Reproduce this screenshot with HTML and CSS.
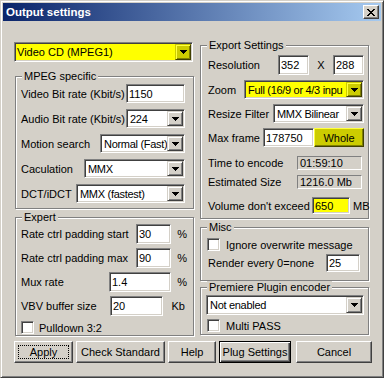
FILE: index.html
```html
<!DOCTYPE html>
<html lang="en">
<head>
    <meta charset="UTF-8">
    <meta name="viewport" content="width=device-width, initial-scale=1.0">
    <title>Output settings</title>
    <link rel="stylesheet" href="styles.css">
</head>
<body>
    <div class="window">
        <div class="titlebar">
            <span class="title">Output settings</span>
            <span class="close">
                <svg width="8" height="7" viewBox="0 0 8 7"><path d="M0 0h2v1H0zM6 0h2v1H6zM1 1h2v1H1zM5 1h2v1H5zM2 2h4v1H2zM3 3h2v1H3zM2 4h4v1H2zM1 5h2v1H1zM5 5h2v1H5zM0 6h2v1H0zM6 6h2v1H6z" fill="#000"/></svg>
            </span>
        </div>
        <div class="columns">
            <div class="col-left">
                <div class="combo yellow format">
                    <span class="combo-text">Video CD (MPEG1)</span>
                    <span class="combo-btn"><svg width="7" height="4" viewBox="0 0 7 4"><path d="M0 0h7v1H0zM1 1h5v1H1zM2 2h3v1H2zM3 3h1v1H3z"/></svg></span>
                </div>
                <div class="group mpeg">
                    <div class="group-title">MPEG specific</div>
                    <div class="rows">
                        <div class="row">
                            <span class="label">Video Bit rate (Kbit/s)</span>
                            <input class="edit bitrate" type="text" value="1150">
                        </div>
                        <div class="row">
                            <span class="label">Audio Bit rate (Kbit/s)</span>
                            <div class="combo bitrate">
                                <span class="combo-text">224</span>
                                <span class="combo-btn"><svg width="7" height="4" viewBox="0 0 7 4"><path d="M0 0h7v1H0zM1 1h5v1H1zM2 2h3v1H2zM3 3h1v1H3z"/></svg></span>
                            </div>
                        </div>
                        <div class="row">
                            <span class="label">Motion search</span>
                            <div class="combo motion">
                                <span class="combo-text">Normal (Fast)</span>
                                <span class="combo-btn"><svg width="7" height="4" viewBox="0 0 7 4"><path d="M0 0h7v1H0zM1 1h5v1H1zM2 2h3v1H2zM3 3h1v1H3z"/></svg></span>
                            </div>
                        </div>
                        <div class="row">
                            <span class="label">Caculation</span>
                            <div class="combo calc">
                                <span class="combo-text">MMX</span>
                                <span class="combo-btn"><svg width="7" height="4" viewBox="0 0 7 4"><path d="M0 0h7v1H0zM1 1h5v1H1zM2 2h3v1H2zM3 3h1v1H3z"/></svg></span>
                            </div>
                        </div>
                        <div class="row">
                            <span class="label">DCT/iDCT</span>
                            <div class="combo dct">
                                <span class="combo-text">MMX (fastest)</span>
                                <span class="combo-btn"><svg width="7" height="4" viewBox="0 0 7 4"><path d="M0 0h7v1H0zM1 1h5v1H1zM2 2h3v1H2zM3 3h1v1H3z"/></svg></span>
                            </div>
                        </div>
                    </div>
                </div>
                <div class="group expert">
                    <div class="group-title">Expert</div>
                    <div class="rows">
                        <div class="row">
                            <span class="label">Rate ctrl padding start</span>
                            <input class="edit padding" type="text" value="30">
                            <span class="unit">%</span>
                        </div>
                        <div class="row">
                            <span class="label">Rate ctrl padding max</span>
                            <input class="edit padding" type="text" value="90">
                            <span class="unit">%</span>
                        </div>
                        <div class="row">
                            <span class="label">Mux rate</span>
                            <input class="edit mux" type="text" value="1.4">
                            <span class="unit">%</span>
                        </div>
                        <div class="row">
                            <span class="label">VBV buffer size</span>
                            <input class="edit vbv" type="text" value="20">
                            <span class="unit wide">Kb</span>
                        </div>
                        <div class="row check-row pulldown">
                            <span class="check"></span>
                            <span class="check-label">Pulldown 3:2</span>
                        </div>
                    </div>
                </div>
            </div>
            <div class="col-right">
                <div class="group export">
                    <div class="group-title">Export Settings</div>
                    <div class="rows">
                        <div class="row tall">
                            <span class="label">Resolution</span>
                            <input class="edit res" type="text" value="352">
                            <span class="times">X</span>
                            <input class="edit res" type="text" value="288">
                        </div>
                        <div class="row">
                            <span class="label">Zoom</span>
                            <div class="combo yellow zoom">
                                <span class="combo-text">Full (16/9 or 4/3 inpu</span>
                                <span class="combo-btn"><svg width="7" height="4" viewBox="0 0 7 4"><path d="M0 0h7v1H0zM1 1h5v1H1zM2 2h3v1H2zM3 3h1v1H3z"/></svg></span>
                            </div>
                        </div>
                        <div class="row">
                            <span class="label">Resize Filter</span>
                            <div class="combo resize">
                                <span class="combo-text">MMX Bilinear</span>
                                <span class="combo-btn"><svg width="7" height="4" viewBox="0 0 7 4"><path d="M0 0h7v1H0zM1 1h5v1H1zM2 2h3v1H2zM3 3h1v1H3z"/></svg></span>
                            </div>
                        </div>
                        <div class="row">
                            <span class="label">Max frame</span>
                            <input class="edit maxframe" type="text" value="178750">
                            <button class="btn yellow whole">Whole</button>
                        </div>
                        <div class="row small time">
                            <span class="label">Time to encode</span>
                            <span class="static">01:59:10</span>
                        </div>
                        <div class="row small">
                            <span class="label">Estimated Size</span>
                            <span class="static">1216.0 Mb</span>
                        </div>
                        <div class="row volume">
                            <span class="label">Volume don't exceed</span>
                            <input class="edit yellow vol" type="text" value="650">
                            <span class="mb">MB</span>
                        </div>
                    </div>
                </div>
                <div class="group misc">
                    <div class="group-title">Misc</div>
                    <div class="rows">
                        <div class="row check-row">
                            <span class="check"></span>
                            <span class="check-label">Ignore overwrite message</span>
                        </div>
                        <div class="row render">
                            <span class="label">Render every 0=none</span>
                            <input class="edit every" type="text" value="25">
                        </div>
                    </div>
                </div>
                <div class="group premiere">
                    <div class="group-title">Premiere Plugin encoder</div>
                    <div class="rows">
                        <div class="row tall">
                            <div class="combo plugin">
                                <span class="combo-text">Not enabled</span>
                                <span class="combo-btn"><svg width="7" height="4" viewBox="0 0 7 4"><path d="M0 0h7v1H0zM1 1h5v1H1zM2 2h3v1H2zM3 3h1v1H3z"/></svg></span>
                            </div>
                        </div>
                        <div class="row check-row">
                            <span class="check"></span>
                            <span class="check-label">Multi PASS</span>
                        </div>
                    </div>
                </div>
            </div>
        </div>
        <div class="buttons">
            <button class="btn focused apply">Apply</button>
            <button class="btn check-std">Check Standard</button>
            <button class="btn help">Help</button>
            <button class="btn default plug">Plug Settings</button>
            <button class="btn cancel">Cancel</button>
        </div>
    </div>
</body>
</html>
```

FILE: styles.css
```css
body {
    margin: 0;
    padding: 0;
    background-color: #d4d0c8;
    font-family: "Liberation Sans", Arial, sans-serif;
    font-size: 11px;
    color: #000;
}
.window {
    width: 384px;
    height: 378px;
    box-sizing: border-box;
    padding: 2px;
    background-color: #d4d0c8;
    border: 1px solid;
    border-color: #d4d0c8 #404040 #404040 #d4d0c8;
    box-shadow: inset 1px 1px #fff, inset -1px -1px #808080;
}
.titlebar {
    height: 18px;
    display: flex;
    align-items: center;
    justify-content: space-between;
    padding: 0 2px 0 3px;
    background: linear-gradient(to right, #0a246a, #a6caf0);
}
.title {
    color: #fff;
    font-weight: bold;
    font-size: 11.5px;
}
.close {
    width: 16px;
    height: 14px;
    box-sizing: border-box;
    display: flex;
    align-items: center;
    justify-content: center;
    background-color: #d4d0c8;
    border: 1px solid;
    border-color: #fff #404040 #404040 #fff;
    box-shadow: inset -1px -1px #808080;
}

/* two columns of group boxes */
.columns {
    display: flex;
    align-items: flex-start;
    gap: 6px;
    padding: 0 11px;
}
.col-left {
    width: 180px;
    margin-top: 21px;
}
.col-right {
    width: 169px;
    margin-top: 24px;
}

/* etched group box */
.group {
    box-sizing: border-box;
    border: 1px solid #808080;
    box-shadow: inset 1px 1px #fff, 1px 1px #fff;
}
.group-title {
    width: fit-content;
    height: 13px;
    line-height: 13px;
    margin: -7px 0 0 6px;
    padding: 0 2px;
    background-color: #d4d0c8;
}
.rows {
    display: flex;
    flex-direction: column;
}
.row {
    display: flex;
    align-items: center;
    height: 19px;
}
.row.tall {
    height: 20px;
}
.row.small {
    height: 14px;
}
.label {
    flex: 1;
    white-space: nowrap;
}

.mpeg {
    width: 179px;
    height: 133px;
    margin-left: 1px;
    margin-top: 14px;
}
.mpeg .rows {
    gap: 6px;
    padding: 1px 8px 0 5px;
}
.expert {
    width: 179px;
    height: 119px;
    margin-left: 1px;
    margin-top: 8px;
}
.expert .rows {
    gap: 4px;
    padding: 0 6px 0 5px;
}
.expert .row {
    height: 20px;
}
.expert .row.pulldown {
    height: 13px;
    margin-top: 1px;
}
.export {
    height: 174px;
}
.export .rows {
    gap: 5px;
    padding: 3px 4px 0 7px;
}
.export .row.time {
    margin-top: 4px;
}
.export .row.volume {
    height: 17px;
    margin-top: 3px;
    margin-right: -3px;
}
.misc {
    height: 54px;
    margin-top: 8px;
}
.misc .rows {
    gap: 3px;
    padding: 4px 8px 0 6px;
}
.misc .row.render {
    height: 18px;
    padding-left: 1px;
}
.premiere {
    height: 48px;
    margin-top: 6px;
}
.premiere .rows {
    gap: 4px;
    padding: 1px 4px 0 5px;
}
.premiere .check-row {
    padding-left: 1px;
}

/* sunken edit field */
.edit {
    box-sizing: border-box;
    height: 100%;
    margin: 0;
    padding: 0 2px;
    font: inherit;
    color: #000;
    background-color: #fff;
    border: 1px solid;
    border-color: #808080 #fff #fff #808080;
    box-shadow: inset 1px 1px #404040, inset -1px -1px #d4d0c8;
    outline: none;
}
.edit.yellow {
    background-color: #ff0;
}
.edit.bitrate { width: 59px; }
.edit.padding { width: 35px; }
.edit.mux { width: 62px; }
.edit.vbv { width: 53px; }
.edit.res { width: 31px; }
.edit.maxframe { width: 51px; }
.edit.vol { width: 38px; }
.edit.every { width: 34px; }

.unit {
    width: 16px;
    text-align: right;
}
.unit.wide {
    width: 22px;
    padding-right: 2px;
}
.times {
    width: 24px;
    text-align: center;
}
.mb {
    margin-left: 3px;
    width: 14px;
}

/* drop-down list */
.combo {
    display: flex;
    box-sizing: border-box;
    height: 100%;
    padding: 1px;
    background-color: #fff;
    border: 1px solid;
    border-color: #808080 #fff #fff #808080;
    box-shadow: inset 1px 1px #404040, inset -1px -1px #d4d0c8;
}
.combo-text {
    flex: 1;
    min-width: 0;
    padding-left: 2px;
    overflow: hidden;
    white-space: nowrap;
    letter-spacing: -0.3px;
    display: flex;
    align-items: center;
}
.combo-btn {
    width: 16px;
    box-sizing: border-box;
    display: flex;
    align-items: center;
    justify-content: center;
    background-color: #d4d0c8;
    border: 1px solid;
    border-color: #d4d0c8 #404040 #404040 #d4d0c8;
    box-shadow: inset 1px 1px #fff, inset -1px -1px #808080;
}
.combo.yellow {
    background-color: #ff0;
}
.combo.yellow .combo-btn {
    background-color: #cccc00;
    border-color: #cccc00 #404000 #404000 #cccc00;
    box-shadow: inset 1px 1px #ffff40, inset -1px -1px #808000;
}
.combo.format {
    width: 179px;
    height: 20px;
}
.combo.format .combo-text {
    padding-left: 1px;
    letter-spacing: 0;
}
.combo.bitrate { width: 59px; }
.combo.motion { width: 85px; }
.combo.calc { width: 101px; }
.combo.dct { width: 109px; }
.combo.zoom { width: 120px; }
.combo.resize { width: 91px; }
.combo.plugin { width: 158px; }

/* read-only value */
.static {
    box-sizing: border-box;
    width: 65px;
    height: 14px;
    line-height: 12px;
    margin-right: 2px;
    padding-left: 2px;
    border: 1px solid;
    border-color: #808080 #fff #fff #808080;
    white-space: nowrap;
}

/* check box */
.check-row {
    height: 13px;
}
.check {
    width: 13px;
    height: 13px;
    box-sizing: border-box;
    background-color: #fff;
    border: 1px solid;
    border-color: #808080 #fff #fff #808080;
    box-shadow: inset 1px 1px #404040, inset -1px -1px #d4d0c8;
}
.check-label {
    margin-left: 6px;
    white-space: nowrap;
}
.pulldown .check-label {
    margin-left: 5px;
}

/* push buttons */
.btn {
    box-sizing: border-box;
    height: 22px;
    margin: 0;
    padding: 0;
    font: inherit;
    color: #000;
    background-color: #d4d0c8;
    border: 1px solid;
    border-color: #fff #404040 #404040 #fff;
    box-shadow: inset -1px -1px #808080;
}
.btn.yellow {
    background-color: #cccc00;
    border-color: #ffff40 #404000 #404000 #ffff40;
    box-shadow: inset -1px -1px #808000;
}
.btn.whole {
    width: 50px;
    height: 19px;
}
.btn.focused {
    outline: 1px dotted #000;
    outline-offset: -5px;
}
.btn.default {
    border: 1px solid #000;
    box-shadow: inset 1px 1px #fff, inset -1px -1px #404040, inset -2px -2px #808080;
}
.buttons {
    display: flex;
    gap: 3px;
    margin-top: 5px;
    padding: 0 9px 0 11px;
}
.btn.apply { width: 59px; }
.btn.check-std { width: 89px; }
.btn.help { width: 48px; }
.btn.plug { width: 72px; }
.btn.cancel {
    width: 76px;
    margin-left: auto;
}
```
